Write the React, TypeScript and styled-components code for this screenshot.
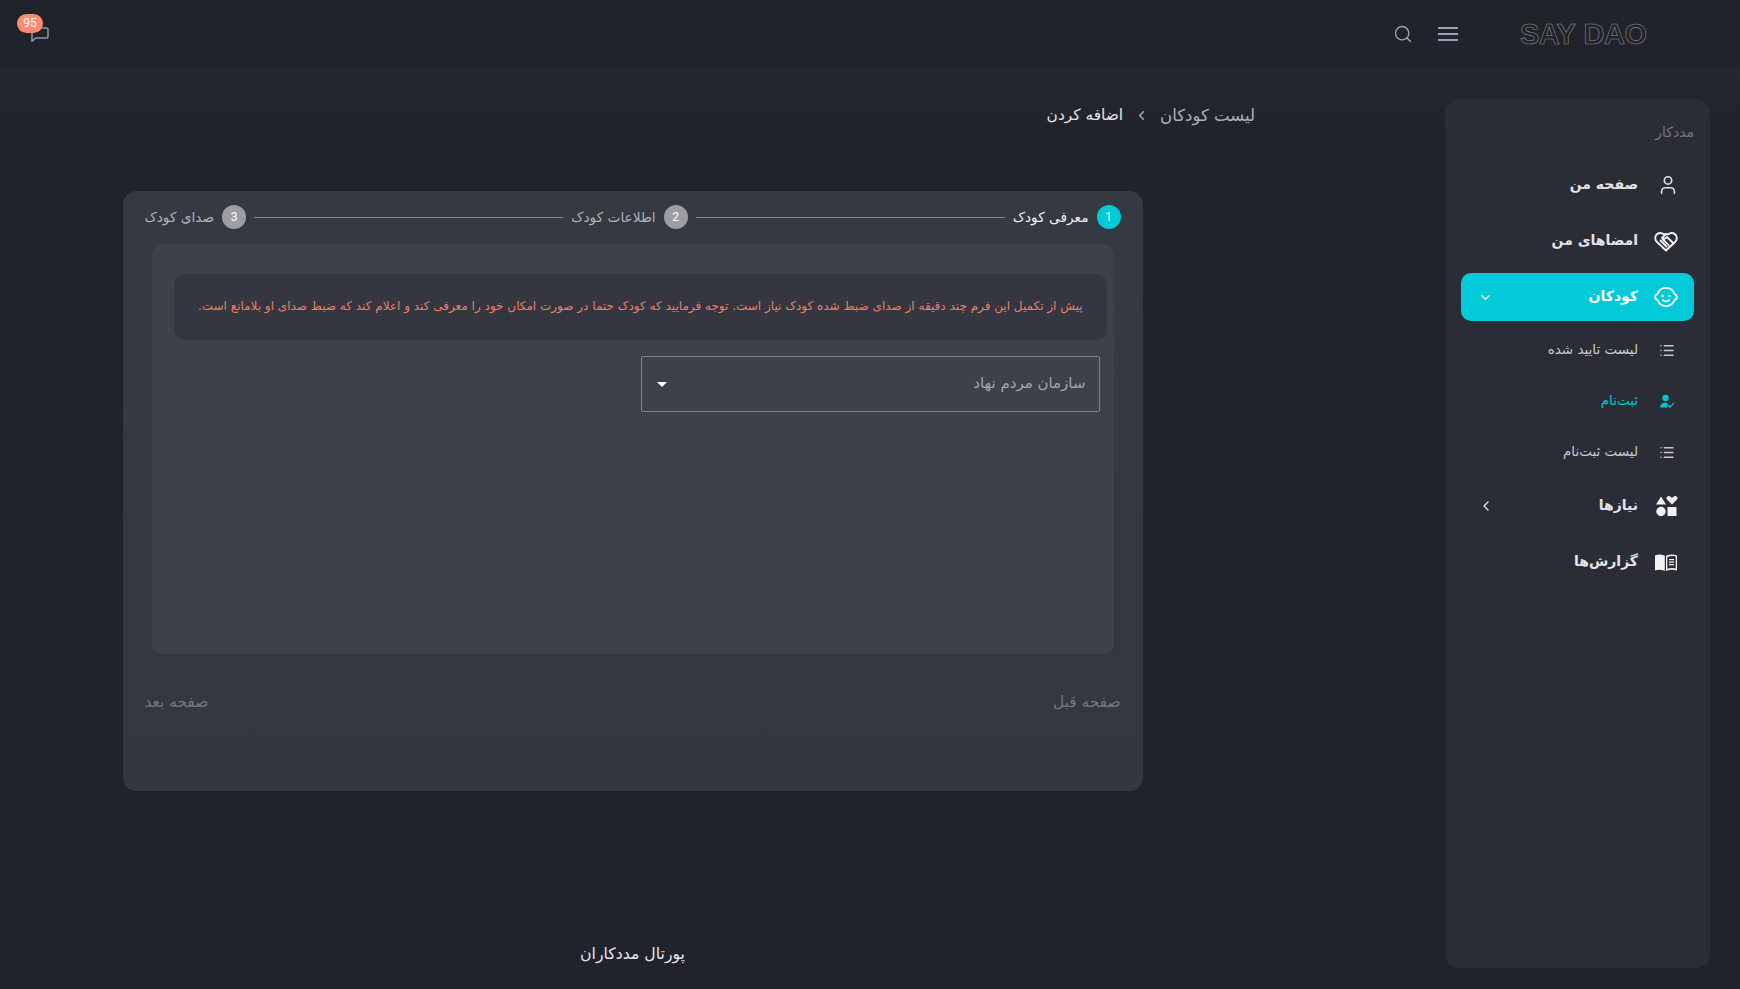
import React from 'react';
import styled, { createGlobalStyle } from 'styled-components';
import { ChevronDown, ChevronLeft, List, Search, User } from 'lucide-react';

const GlobalStyle = createGlobalStyle`
  html, body {
    margin: 0;
    height: 100%;
    background: #20232b;
  }
  body {
    font-family: "DejaVu Sans", "Noto Sans", sans-serif;
    direction: rtl;
    overflow: hidden;
  }
  * {
    box-sizing: border-box;
  }
`;

function BubbleIcon() {
  return (
    <svg width="20" height="20" viewBox="0 0 20 20" fill="none" stroke="#8a93a6" strokeWidth="1.6">
      <path d="M2 17.5V5.500a1.500 1.500 0 0 1 1.500-1.500h13a1.500 1.500 0 0 1 1.500 1.500v7a1.500 1.500 0 0 1-1.500 1.500H5.500z" strokeLinejoin="round" />
    </svg>
  );
}

function HandsIcon() {
  return (
    <svg width="24" height="24" viewBox="0 0 24 24" fill="none" stroke="#f2f2f3" strokeWidth="1.9" strokeLinecap="round" strokeLinejoin="round">
      <path d="M12 21.500L3 13A5 5 0 0 1 9.800 5.200h4.400A5 5 0 0 1 21 13z" />
      <path d="M11.500 5.500L8 9c1.500 1.500 3.500.8 5-1l6.500 6.500" />
      <path d="M6.500 11.500l6 6M9 10.500l5.800 5.800" />
    </svg>
  );
}

function FaceIcon() {
  return (
    <svg width="24" height="24" viewBox="0 0 24 24" fill="none" stroke="#fff" strokeWidth="1.8" strokeLinecap="round">
      <path d="M3.500 9A9 9 0 0 1 20.500 9C22 9.500 22.800 10.500 22.800 12C22.800 13.500 22 14.500 20.500 15A9 9 0 0 1 3.500 15C2 14.500 1.200 13.500 1.200 12C1.200 10.500 2 9.500 3.500 9Z" strokeLinejoin="round" />
      <path d="M8.800 15.200c1.800 1.600 4.600 1.600 6.400 0" />
      <circle cx="8.600" cy="11" r="1.300" fill="#fff" stroke="none" />
      <circle cx="15.400" cy="11" r="1.300" fill="#fff" stroke="none" />
    </svg>
  );
}

function ShapesIcon() {
  return (
    <svg width="24" height="24" viewBox="0 0 24 24" fill="#f2f2f3">
      <path d="M7 2.500l5 8H2z" />
      <path d="M18 10.500l-4.800-4.700c-2-2.200.8-5.200 3.100-3.200l1.700 1.400 1.700-1.400c2.300-2 5.100 1 3.100 3.200z" />
      <circle cx="7" cy="17.500" r="4.700" />
      <rect x="13.500" y="13" width="9" height="9" />
    </svg>
  );
}

function BookIcon() {
  return (
    <svg width="24" height="24" viewBox="0 0 24 24" fill="#f2f2f3">
      <path d="M1 5.500c3-1.300 6.500-1.300 9.800.3v15.200c-3.300-1.500-6.800-1.500-9.800-.4z" />
      <path d="M12 5.800c3.500-1.600 7.400-1.600 11-.3v15.100c-3.600-1.100-7.500-1.100-11 .4zM13.300 7v11.700c2.800-.9 5.800-.9 8.400-.2V6.400c-2.800-.6-5.700-.4-8.400.6z" />
      <path d="M15 9h5v1.300h-5zM15 11.500h5v1.300h-5zM15 14h5v1.300h-5z" />
    </svg>
  );
}

function UserCheckIcon() {
  return (
    <svg width="16" height="16" viewBox="0 0 16 16" fill="#03c4d4">
      <circle cx="6.500" cy="5" r="3.200" />
      <path d="M1 14.500c0-3 2.400-4.800 5.500-4.800.8 0 1.500.1 2.100.3l-.6 4.500z" />
      <path d="M9 12l2 2 4-4" fill="none" stroke="#03c4d4" strokeWidth="1.300" />
    </svg>
  );
}

const steps = [
  { num: 1, label: 'معرفی کودک', active: true },
  { num: 2, label: 'اطلاعات کودک', active: false },
  { num: 3, label: 'صدای کودک', active: false },
];

function App() {
  return (
    <>
      <GlobalStyle />
      <Page>
        <Header>
          <Logo>SAY DAO</Logo>
          <HeaderIcons>
            <MenuLines>
              <span />
              <span />
              <span />
            </MenuLines>
            <Search size={20} color="#9aa3b5" strokeWidth={1.7} />
          </HeaderIcons>
          <Chat>
            <BubbleIcon />
            <Badge>95</Badge>
          </Chat>
        </Header>
        <Body>
          <Sidebar>
            <SideTitle>مددکار</SideTitle>
            <NavItem>
              <NavIcon>
                <UserIcon size={22} strokeWidth={1.8} />
              </NavIcon>
              <NavLabel>صفحه من</NavLabel>
            </NavItem>
            <NavItem>
              <NavIcon>
                <HandsIcon />
              </NavIcon>
              <NavLabel>امضاهای من</NavLabel>
            </NavItem>
            <NavItem $active>
              <NavIcon>
                <FaceIcon />
              </NavIcon>
              <NavLabel>کودکان</NavLabel>
              <NavChevron>
                <ChevronDown size={15} />
              </NavChevron>
            </NavItem>
            <SubMenu>
              <SubItem>
                <SubIcon>
                  <List size={17} strokeWidth={2.2} />
                </SubIcon>
                لیست تایید شده
              </SubItem>
              <SubItem $active>
                <SubIcon>
                  <UserCheckIcon />
                </SubIcon>
                ثبت‌نام
              </SubItem>
              <SubItem>
                <SubIcon>
                  <List size={17} strokeWidth={2.2} />
                </SubIcon>
                لیست ثبت‌نام
              </SubItem>
            </SubMenu>
            <NavItem>
              <NavIcon>
                <ShapesIcon />
              </NavIcon>
              <NavLabel>نیازها</NavLabel>
              <NavChevron>
                <ChevronLeft size={16} />
              </NavChevron>
            </NavItem>
            <NavItem>
              <NavIcon>
                <BookIcon />
              </NavIcon>
              <NavLabel>گزارش‌ها</NavLabel>
            </NavItem>
          </Sidebar>
          <Main>
            <Breadcrumb>
              <CrumbLink>لیست کودکان</CrumbLink>
              <ChevronLeft size={15} color="#b4b6bb" />
              <CrumbCurrent>اضافه کردن</CrumbCurrent>
            </Breadcrumb>
            <Card>
              <Stepper>
                {steps.map((step, i) => (
                  <React.Fragment key={step.num}>
                    {i > 0 && <StepLine />}
                    <Step>
                      <StepCircle $active={step.active}>{step.num}</StepCircle>
                      <StepLabel $active={step.active}>{step.label}</StepLabel>
                    </Step>
                  </React.Fragment>
                ))}
              </Stepper>
              <FormPanel>
                <Alert>
                  پیش از تکمیل این فرم چند دقیقه از صدای ضبط شده کودک نیاز است. توجه فرمایید که کودک حتما در صورت امکان خود را معرفی کند و اعلام کند که ضبط صدای او بلامانع است.
                </Alert>
                <Select>
                  <SelectText>سازمان مردم نهاد</SelectText>
                  <SelectArrow />
                </Select>
              </FormPanel>
              <CardActions>
                <ActionLink>صفحه قبل</ActionLink>
                <ActionLink>صفحه بعد</ActionLink>
              </CardActions>
            </Card>
            <Footer>پورتال مددکاران</Footer>
          </Main>
        </Body>
      </Page>
    </>
  );
}

export default App;

const Page = styled.div`
  width: 1740px;
  height: 989px;
  display: flex;
  flex-direction: column;
  background: #20232b;
`;
const Header = styled.header`
  height: 68px;
  flex: none;
  display: flex;
  align-items: center;
  padding: 0 92px 0 0;
  background: #20232a;
`;
const Logo = styled.span`
  font-family: "Liberation Sans", sans-serif;
  font-weight: 700;
  font-size: 29px;
  line-height: 34px;
  width: 128px;
  direction: ltr;
  white-space: nowrap;
  letter-spacing: -0.5px;
  word-spacing: 1px;
  color: #20232a;
  -webkit-text-stroke: 0.6px #8a8c91;
`;
const HeaderIcons = styled.div`
  display: flex;
  align-items: center;
  gap: 25px;
  margin-right: 62px;
`;
const MenuLines = styled.div`
  width: 20px;
  display: flex;
  flex-direction: column;
  gap: 4px;
  span {
    height: 2px;
    background: #9aa3b5;
  }
`;
const Chat = styled.div`
  position: relative;
  margin-right: auto;
  margin-left: 30px;
  width: 20px;
  height: 20px;
  display: flex;
`;
const Badge = styled.span`
  position: absolute;
  top: -10px;
  right: 7px;
  width: 26px;
  height: 19px;
  border-radius: 10px;
  background: #fd8c73;
  color: #fff;
  font-family: Roboto, sans-serif;
  font-size: 12px;
  line-height: 19px;
  text-align: center;
`;
const Body = styled.div`
  flex: 1;
  display: flex;
  min-height: 0;
  padding: 31px 30px 21px 0;
  background: linear-gradient(180deg, #252831 0, #20232b 62px);
`;
const Sidebar = styled.aside`
  width: 265px;
  flex: none;
  display: flex;
  flex-direction: column;
  padding: 0 16px;
  border-radius: 14px;
  background: #2a2d36;
`;
const SideTitle = styled.div`
  height: 33px;
  margin-top: 17px;
  margin-bottom: 12px;
  color: #75787f;
  font-size: 14px;
  line-height: 33px;
`;
const NavItem = styled.div<{ $active?: boolean }>`
  height: 48px;
  flex: none;
  margin-bottom: ${(p) => (p.$active ? '2px' : '8px')};
  display: flex;
  align-items: center;
  padding: 0 16px 0 17px;
  border-radius: 10px;
  background: ${(p) => (p.$active ? '#03cad9' : 'transparent')};
  color: ${(p) => (p.$active ? '#fff' : '#e4e4e6')};
`;
const NavIcon = styled.span`
  width: 24px;
  height: 24px;
  margin-left: 16px;
  display: flex;
  align-items: center;
  justify-content: center;
`;
const UserIcon = styled(User)`
  transform: translateX(2px);
`;
const NavLabel = styled.span`
  font-size: 14px;
  font-weight: 700;
  padding-bottom: 2px;
`;
const NavChevron = styled.span`
  margin-right: auto;
  display: flex;
`;
const SubMenu = styled.div`
  display: flex;
  flex-direction: column;
  margin-bottom: 6px;
`;
const SubItem = styled.div<{ $active?: boolean }>`
  height: 51px;
  display: flex;
  align-items: center;
  padding: 0 19px 0 0;
  font-size: 13.500px;
  color: ${(p) => (p.$active ? '#03c4d4' : '#c9cacd')};
`;
const SubIcon = styled.span`
  width: 16px;
  height: 17px;
  margin-top: 3px;
  margin-left: 21px;
  display: flex;
  align-items: center;
  justify-content: center;
  color: #c9cacd;
`;
const Main = styled.main`
  flex: 1;
  display: flex;
  flex-direction: column;
  padding-right: 180px;
  min-width: 0;
`;
const Breadcrumb = styled.nav`
  display: flex;
  align-items: center;
  gap: 11px;
  height: 32px;
  padding-right: 10px;
`;
const CrumbLink = styled.span`
  color: #aeb0b5;
  font-size: 16.500px;
`;
const CrumbCurrent = styled.span`
  color: #e6e6e8;
  font-size: 15.400px;
`;
const Card = styled.section`
  width: 1020px;
  height: 600px;
  margin: 60px auto 0;
  border-radius: 14px;
  background: linear-gradient(180deg, #353941 0%, #33373f 100%);
  display: flex;
  flex-direction: column;
`;
const Stepper = styled.div`
  height: 51px;
  margin-bottom: 2px;
  flex: none;
  display: flex;
  align-items: center;
  padding: 0 22px;
`;
const Step = styled.div`
  display: flex;
  align-items: center;
  gap: 8px;
`;
const StepCircle = styled.span<{ $active: boolean }>`
  width: 24px;
  height: 24px;
  border-radius: 50%;
  font-family: Roboto, sans-serif;
  font-size: 12px;
  line-height: 24px;
  text-align: center;
  color: #fff;
  background: ${(p) => (p.$active ? '#03cad9' : '#9c9ea3')};
`;
const StepLabel = styled.span<{ $active: boolean }>`
  font-size: 13.700px;
  color: ${(p) => (p.$active ? '#f0f0f1' : '#b0b2b6')};
`;
const StepLine = styled.span`
  flex: 1;
  height: 1px;
  margin: 2px 8px 0;
  background: #85878c;
`;
const FormPanel = styled.div`
  height: 410px;
  flex: none;
  margin: 0 29px;
  padding: 30px 7px 0;
  border-radius: 10px;
  background: #3e4149;
  display: flex;
  flex-direction: column;
`;
const Alert = styled.div`
  height: 66px;
  margin-left: 15px;
  flex: none;
  padding: 0 24px 0 0;
  border-radius: 10px;
  background: #34373f;
  color: #ed7f66;
  font-size: 12px;
  line-height: 65px;
  white-space: nowrap;
`;
const Select = styled.div`
  width: 459px;
  height: 56px;
  margin: 16px 7px 0 0;
  padding: 0 13px 2px 15px;
  display: flex;
  align-items: center;
  justify-content: space-between;
  border: 1px solid #808287;
  border-radius: 2px;
`;
const SelectText = styled.span`
  color: #9fa6b2;
  font-size: 15px;
`;
const SelectArrow = styled.span`
  width: 0;
  height: 0;
  margin-top: 2px;
  border-left: 5px solid transparent;
  border-right: 5px solid transparent;
  border-top: 5px solid #fff;
`;
const CardActions = styled.div`
  display: flex;
  justify-content: space-between;
  padding: 39px 22px 0;
`;
const ActionLink = styled.span`
  color: #77797e;
  font-size: 15.400px;
`;
const Footer = styled.footer`
  margin-top: auto;
  text-align: center;
  color: #e6e6e8;
  font-size: 15.700px;
  line-height: 20px;
  margin-bottom: 4px;
`;
